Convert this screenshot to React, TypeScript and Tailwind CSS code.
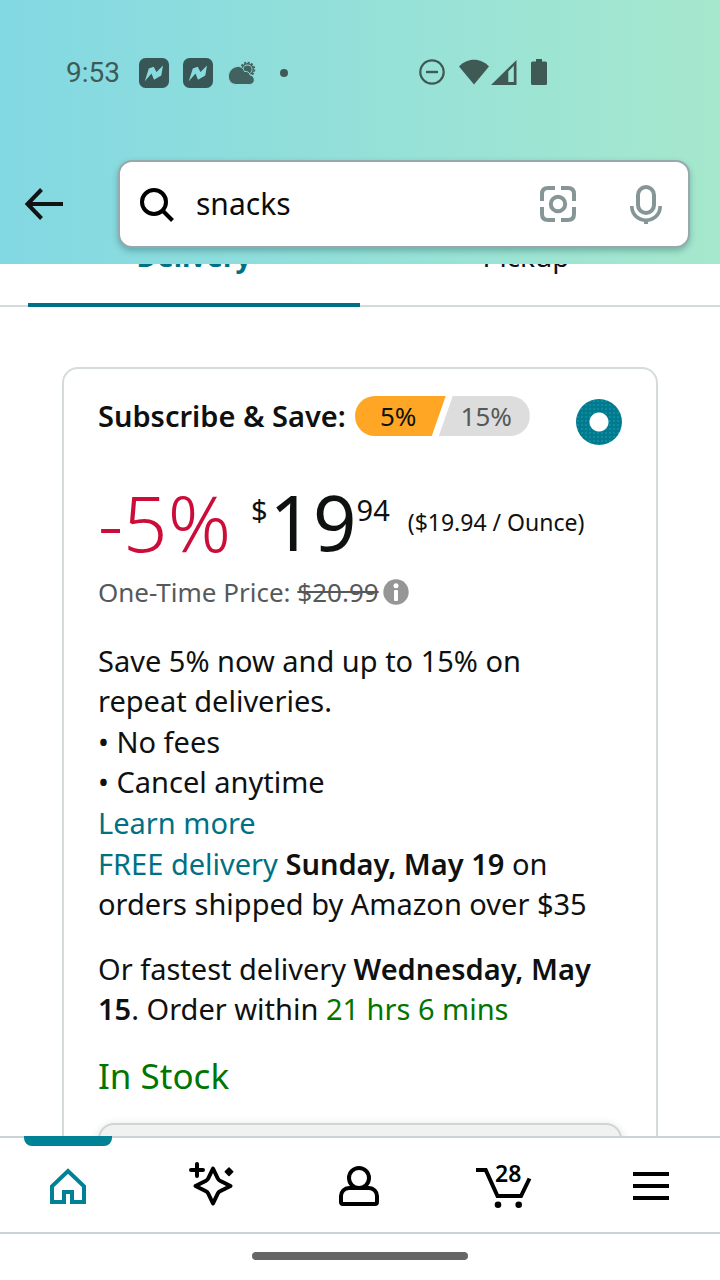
import React from 'react';

const stroke = { fill: 'none', stroke: 'currentColor', strokeWidth: 4 } as const;

function NewsIcon() {
  return (
    <svg viewBox="0 0 30 30" className="size-[30px]" aria-hidden="true">
      <rect width="30" height="30" rx="6.5" fill="#385656" />
      <path d="M5.8 23.2 L9.8 10.600 L14.700 8.700 L17.500 14 L24 7.600 L22.300 17.500 L15 21.700 L12.500 15.500 Z" fill="#8adbdd" />
    </svg>
  );
}

function WeatherIcon() {
  return (
    <svg viewBox="0 0 28 24" className="h-6 w-7" aria-hidden="true">
      <circle cx="19.500" cy="8.500" r="6.900" fill="none" stroke="#42625f" strokeWidth="1.800" strokeDasharray="2 1.610" />
      <circle cx="19.500" cy="8.500" r="5.700" fill="none" stroke="#42625f" strokeWidth="1.500" />
      <circle cx="19.500" cy="8.500" r="4.100" fill="#42625f" />
      <path
        d="M9 5.500 C12.500 5 15.500 7.500 16.500 10.500 C19.500 10 21.500 11.500 22 14 C28 15 27.500 23.500 21.500 23.500 H8 C-2.500 23 -2 7.500 9 5.500 Z"
        fill="#42625f"
        stroke="#8cdcdc"
        strokeWidth="1"
      />
    </svg>
  );
}

function StatusBar() {
  return (
    <div className="flex h-[146px] items-center justify-between pr-[173px] pl-[66px] text-[#3f5a55]">
      <div className="flex items-center">
        <span className="font-[Roboto,sans-serif] text-[28px] leading-8">9:53</span>
        <span className="ml-[19px] flex gap-[14px]">
          <NewsIcon />
          <NewsIcon />
        </span>
        <span className="ml-[15px]">
          <WeatherIcon />
        </span>
        <span className="ml-6 size-2 rounded-full bg-current" />
      </div>
      <div className="flex items-center pb-[2px]">
        <svg viewBox="0 0 26 26" className="size-[26px]" aria-hidden="true">
          <circle cx="13" cy="13" r="11.700" fill="none" stroke="currentColor" strokeWidth="2.200" />
          <path d="M7 13 H19" stroke="currentColor" strokeWidth="2.400" />
        </svg>
        <svg viewBox="0 0 30 26" className="ml-[14px] h-[26px] w-[30px]" aria-hidden="true">
          <path d="M0 7.500 C8 -1.500 22 -1.500 30 7.500 L15 25.500 Z" fill="currentColor" />
        </svg>
        <svg viewBox="0 0 26 26" className="ml-[2px] size-[26px]" aria-hidden="true">
          <path d="M0 26 L25.500 1 V26 Z M17.300 12.500 V23 H22.800 V6.800 Z" fillRule="evenodd" fill="currentColor" />
        </svg>
        <svg viewBox="0 0 16 26" className="ml-[14px] h-[26px] w-4" aria-hidden="true">
          <path d="M5 0 H11 V2.500 H14.500 Q16 2.500 16 4 V24.500 Q16 26 14.500 26 H1.500 Q0 26 0 24.500 V4 Q0 2.500 1.500 2.500 H5 Z" fill="currentColor" />
        </svg>
      </div>
    </div>
  );
}

function SearchHeader() {
  return (
    <header className="relative z-10 shrink-0 bg-linear-to-r from-[#82d8e3] to-[#a6e8cd]">
      <StatusBar />
      <div className="flex items-center pt-[14px] pr-[30px] pb-4 pl-6">
        <button type="button" aria-label="Back" className="text-[#131313]">
          <svg viewBox="0 0 40 40" className="size-10" aria-hidden="true">
            <path d="M4 20 H39 M17.500 5.500 L3.500 20 L17.500 34.500" {...stroke} />
          </svg>
        </button>
        <form
          role="search"
          onSubmit={(e) => e.preventDefault()}
          className="ml-[54px] flex h-[88px] min-w-0 flex-1 items-center rounded-[14px] border-2 border-[#98a8ac] bg-white pr-6 pl-[18px] shadow-[0_3px_6px_rgba(0,60,60,0.3)]"
        >
          <svg viewBox="0 0 36 36" className="size-9 shrink-0 text-black" aria-hidden="true">
            <circle cx="16" cy="16" r="12" {...stroke} />
            <path d="M24.500 24.500 L34.500 34.500" {...stroke} />
          </svg>
          <input
            type="text"
            aria-label="Search"
            defaultValue="snacks"
            className="ml-[22px] min-w-0 flex-1 bg-transparent text-[30px] leading-10 text-[#0b0b0b] outline-none"
          />
          <button type="button" aria-label="Search with camera" className="text-[#869596]">
            <svg viewBox="0 0 36 36" className="size-9" aria-hidden="true">
              <path
                d="M2 15 V8 Q2 2 8 2 H15 M21 2 H28 Q34 2 34 8 V15 M34 21 V28 Q34 34 28 34 H21 M15 34 H8 Q2 34 2 28 V21"
                {...stroke}
              />
              <circle cx="18" cy="18" r="7.200" {...stroke} />
            </svg>
          </button>
          <button type="button" aria-label="Search by voice" className="ml-[52px] text-[#869596]">
            <svg viewBox="0 0 36 40" className="h-10 w-9" aria-hidden="true">
              <rect x="10" y="3" width="16" height="26" rx="8" {...stroke} />
              <path d="M3.800 22 C4 41 32 41 32.200 22" {...stroke} strokeWidth={3.600} />
              <path d="M18 36 V40" {...stroke} />
            </svg>
          </button>
        </form>
      </div>
    </header>
  );
}

function DeliveryTabs() {
  return (
    <div role="tablist" className="-mt-[37px] flex h-20 border-b-2 border-[#d5dbdb] px-7">
      <button
        type="button"
        role="tab"
        aria-selected="true"
        className="-mb-[2px] flex-1 border-b-4 border-[#007185] pb-[18px] text-[28px] leading-10 font-bold text-[#007185]"
      >
        Delivery
      </button>
      <button type="button" role="tab" aria-selected="false" className="flex-1 pb-5 text-[28px] leading-10">
        Pickup
      </button>
    </div>
  );
}

function OfferCard() {
  return (
    <section className="mx-[62px] mt-[60px] rounded-2xl border-2 border-[#d5dbdb] px-[34px] pt-[27px] pb-8">
      <div className="flex items-start justify-between">
        <label htmlFor="subscribe" className="flex items-center gap-[9px]">
          <span className="text-[29px] leading-10 font-semibold whitespace-nowrap">Subscribe &amp; Save:</span>
          <span className="flex text-[26px] leading-10">
            <span className="w-[91px] rounded-l-full bg-[#ffa724] pr-1 text-center [clip-path:polygon(0_0,100%_0,77px_100%,0_100%)]">
              5%
            </span>
            <span className="-ml-[7px] w-[91px] rounded-r-full bg-[#dddddd] pl-1 text-center text-[#565959] [clip-path:polygon(14px_0,100%_0,100%_100%,0_100%)]">
              15%
            </span>
          </span>
        </label>
        <input
          id="subscribe"
          type="radio"
          name="offer"
          defaultChecked
          className="mt-[3px] size-[46px] shrink-0 appearance-none rounded-full bg-[#007a8f] bg-[radial-gradient(circle,white_9px,transparent_10px),radial-gradient(circle,#12899c_0.8px,transparent_1px)] bg-[length:100%_100%,4px_4px]"
        />
      </div>

      <div className="mt-[37px] flex h-20 items-start whitespace-nowrap">
        <span className="text-[78px] leading-20 font-light text-[#cc0c39]">-5%</span>
        <span className="mt-2 ml-5 text-[29px] leading-10">$</span>
        <span className="ml-[2px] text-[76px] leading-20">19</span>
        <span className="mt-2 text-[29px] leading-10">94</span>
        <span className="ml-[18px] text-[23px] leading-20">($19.94 / Ounce)</span>
      </div>

      <p className="mt-[10px] flex items-center text-[26px] leading-10 text-[#565959]">
        <span>
          One-Time Price: <s>$20.99</s>
        </span>
        <button type="button" aria-label="Price details" className="ml-1">
          <svg viewBox="0 0 26 26" className="size-[26px]" aria-hidden="true">
            <circle cx="13" cy="13" r="12.700" fill="#969696" />
            <circle cx="13" cy="6.800" r="2.500" fill="white" />
            <rect x="11" y="11" width="4" height="11" rx="1" fill="white" />
          </svg>
        </button>
      </p>

      <div className="mt-[29px] flex flex-col gap-px text-[29px] leading-10">
        <p className="pr-6">Save 5% now and up to 15% on repeat deliveries.</p>
        <ul>
          <li>• No fees</li>
          <li>• Cancel anytime</li>
        </ul>
        <a href="#learn" className="text-[#007185]">
          Learn more
        </a>
        <p>
          <a href="#delivery" className="text-[#007185]">
            FREE delivery
          </a>{' '}
          <b className="font-semibold">Sunday, May 19</b> on orders shipped by Amazon over $35
        </p>
      </div>

      <p className="mt-[25px] text-[29px] leading-10">
        Or fastest delivery <b className="font-semibold">Wednesday, May 15</b>. Order within{' '}
        <span className="text-[#007600]">21 hrs 6 mins</span>
      </p>

      <p className="mt-[27px] text-[35px] leading-10 text-[#007600]">In Stock</p>

      <label className="mt-[27px] block">
        <select
          aria-label="Quantity"
          className="block h-16 w-full appearance-none rounded-2xl border-2 border-[#d0d4d4] bg-[#f0f2f2] shadow-[0_2px_10px_rgba(15,17,17,0.15)]"
        />
      </label>
    </section>
  );
}

function NavItem({ label, active, children }: { label: string; active?: boolean; children: React.ReactNode }) {
  return (
    <a
      href={`#${label.toLowerCase()}`}
      aria-label={label}
      className={
        active
          ? 'relative flex h-full w-[88px] items-center justify-center text-[#008296]'
          : 'relative flex h-full w-[88px] items-center justify-center text-black'
      }
    >
      {active && <span className="absolute inset-x-0 -top-[2px] h-[10px] rounded-b-lg bg-[#008296]" />}
      {children}
    </a>
  );
}

const iconClass = 'h-12 w-12 overflow-visible';

function BottomNav() {
  return (
    <footer className="relative z-10 shrink-0 bg-white">
      <nav className="flex h-[98px] items-center justify-between border-y-2 border-[#c8d4d5] px-6">
        <NavItem label="Home" active>
          <svg viewBox="0 0 48 48" className={iconClass} aria-hidden="true">
            <path d="M8 41 V25.300 L24 10 L40 25.300 V41 H28 V31 H20 V41 Z" {...stroke} />
          </svg>
        </NavItem>
        <NavItem label="Discover">
          <svg viewBox="0 0 48 48" className={iconClass} aria-hidden="true">
            <path
              d="M23 7.500 L27.800 17.500 Q28.500 19 30 19.700 L40.500 25 L30 30.300 Q28.500 31 27.800 32.500 L23 42.500 L18.200 32.500 Q17.500 31 16 30.300 L5.500 25 L16 19.700 Q17.500 19 18.200 17.500 Z"
              {...stroke}
              strokeLinejoin="round"
            />
            <path d="M7 3 V15 M1 9 H13" {...stroke} strokeLinecap="round" />
            <path d="M39 7 L42.700 10.700 L39 14.400 L35.300 10.700 Z" fill="currentColor" stroke="currentColor" strokeWidth="1.600" strokeLinejoin="round" />
          </svg>
        </NavItem>
        <NavItem label="Account">
          <svg viewBox="0 0 48 48" className={iconClass} aria-hidden="true">
            <circle cx="23" cy="17" r="10" {...stroke} />
            <path
              d="M13 27 H33 A8 8 0 0 1 41 35 V41 A2 2 0 0 1 39 43 H7 A2 2 0 0 1 5 41 V35 A8 8 0 0 1 13 27 Z"
              {...stroke}
            />
          </svg>
        </NavItem>
        <NavItem label="Cart">
          <span className="relative">
            <svg viewBox="0 0 60 48" className="h-12 w-[60px]" aria-hidden="true">
              <path d="M0 9 H9.700 L21.500 35 H45 L53.500 17.500" {...stroke} />
              <circle cx="22" cy="43.700" r="3.300" fill="currentColor" />
              <circle cx="42.700" cy="43.700" r="3.300" fill="currentColor" />
            </svg>
            <span className="absolute top-0 left-[19px] text-[23px] leading-6 font-semibold">28</span>
          </span>
        </NavItem>
        <NavItem label="Menu">
          <svg viewBox="0 0 48 48" className={iconClass} aria-hidden="true">
            <path d="M5 13 H41 M5 25 H41 M5 37 H41" {...stroke} />
          </svg>
        </NavItem>
      </nav>
      <div className="flex h-[46px] items-center justify-center pb-[2px]">
        <span className="h-2 w-[216px] rounded-full bg-[#666666]" />
      </div>
    </footer>
  );
}

export default function App() {
  return (
    <div className="flex h-screen flex-col overflow-hidden bg-white font-['Noto_Sans',sans-serif] text-[#0f1111]">
      <SearchHeader />
      <main className="min-h-0 flex-1 overflow-hidden">
        <DeliveryTabs />
        <OfferCard />
      </main>
      <BottomNav />
    </div>
  );
}
